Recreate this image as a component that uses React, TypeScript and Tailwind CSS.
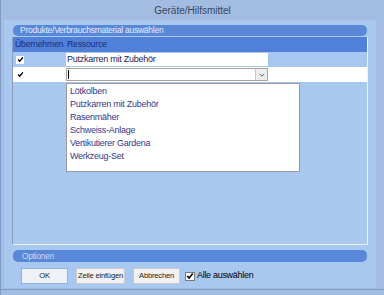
const items = [
  'Lötkolben',
  'Putzkarren mit Zubehör',
  'Rasenmäher',
  'Schweiss-Anlage',
  'Vertikutierer Gardena',
  'Werkzeug-Set',
]

function Tick({ className }: { className?: string }) {
  return (
    <svg viewBox="0 0 8 8" className={className}>
      <path d="M1.3 4.1 L3.1 6 L6.7 1.5" stroke="#000" strokeWidth="1.6" fill="none" />
    </svg>
  )
}

function CellCheck() {
  return (
    <div className="w-[8px] h-[8px] bg-white flex items-center justify-center">
      <Tick className="w-[7px] h-[7px]" />
    </div>
  )
}

export default function App() {
  return (
    <div className="w-[384px] h-[295px] bg-[#a3bde2] border-l border-[#7e99c4] flex flex-col font-['Liberation_Sans',Arial,sans-serif] overflow-hidden">
      {/* Title bar */}
      <div className="h-[20px] flex items-center justify-center text-[10px] text-[#34455f] pt-[1px]">
        Geräte/Hilfsmittel
      </div>

      {/* Client area */}
      <div className="ml-[3px] w-[372px] h-[268px] bg-[#a9c8f0] flex flex-col pt-[5px] px-[8px]">
        {/* Section header */}
        <div className="mx-[1px] h-[11px] rounded-[5px] bg-[#5a88d8] text-[8.5px] tracking-[-0.25px] leading-[11px] text-[#e4ecf9] pl-[7px]">
          Produkte/Verbrauchsmaterial auswählen
        </div>

        {/* Grid */}
        <div className="relative mt-[1px] h-[208px] border-l border-[#8a9cb8] border-r border-b border-r-[#e8f1fc] border-b-[#e8f1fc] bg-[#a9c8f0]">
          <div className="flex h-[15px] bg-[#5080d8] text-[8.7px] tracking-[-0.2px] leading-[15px] text-[#1a2d78]">
            <div className="w-[53px] pl-[2px]">Übernehmen</div>
            <div className="pl-[1px]">Ressource</div>
          </div>

          <div className="flex h-[15px] items-center bg-[#a7c7f1]">
            <div className="w-[53px] pl-[3px] flex items-center">
              <CellCheck />
            </div>
            <div className="w-[202px] h-[13px] bg-white text-[9px] tracking-[-0.25px] leading-[13px] text-[#1c2260] pl-[1px]">
              Putzkarren mit Zubehör
            </div>
          </div>

          <div className="flex h-[15px] items-center bg-white">
            <div className="w-[53px] pl-[3px] flex items-center">
              <CellCheck />
            </div>
            <div className="w-[202px] h-[13px] border border-[#a6a6a6] bg-white flex items-center justify-between">
              <div className="ml-[1px] w-px h-[9px] bg-black" />
              <div className="w-[12px] h-[11px] border-l border-[#c8c8c8] bg-[#eeeeee] flex items-center justify-center">
                <svg viewBox="0 0 8 8" className="w-[6px] h-[6px]">
                  <path d="M1 2.5 L4 5.5 L7 2.5" stroke="#555" strokeWidth="1.3" fill="none" />
                </svg>
              </div>
            </div>
          </div>

          {/* Open dropdown list */}
          <div className="absolute left-[53px] top-[46px] w-[234px] h-[89px] bg-white border border-[#9a9a9a] pt-[1px] pl-[3px] text-[9px] tracking-[-0.25px] leading-[13px] text-[#35378c]">
            {items.map((it) => (
              <div key={it}>{it}</div>
            ))}
          </div>
        </div>

        {/* Options header */}
        <div className="mt-[5px] mx-[1px] h-[12px] rounded-[5px] bg-[#5a88d8] text-[8.3px] tracking-[-0.2px] leading-[12px] text-[#cddbf1] pl-[9px]">
          Optionen
        </div>

        {/* Buttons */}
        <div className="mt-[6px] flex items-center pl-[9px] text-[7.6px] tracking-[-0.2px] text-[#222]">
          <button className="w-[47px] h-[16px] bg-[#eef2f8] border border-[#8fb2e0]">OK</button>
          <button className="ml-[8px] w-[49px] h-[16px] bg-[#f1f1f1] border border-[#c9c9c9]">Zeile einfügen</button>
          <button className="ml-[8px] w-[47px] h-[16px] bg-[#f1f1f1] border border-[#c9c9c9]">Abbrechen</button>
          <div className="ml-[5px] w-[10px] h-[9px] bg-white border border-[#7a7a7a] flex items-center justify-center">
            <Tick className="w-[8px] h-[8px]" />
          </div>
          <span className="ml-[2px] text-[9px] tracking-[-0.3px] text-black">Alle auswählen</span>
        </div>
      </div>

      <div className="h-px bg-[#7e99c4] mt-[1px]" />
    </div>
  )
}
